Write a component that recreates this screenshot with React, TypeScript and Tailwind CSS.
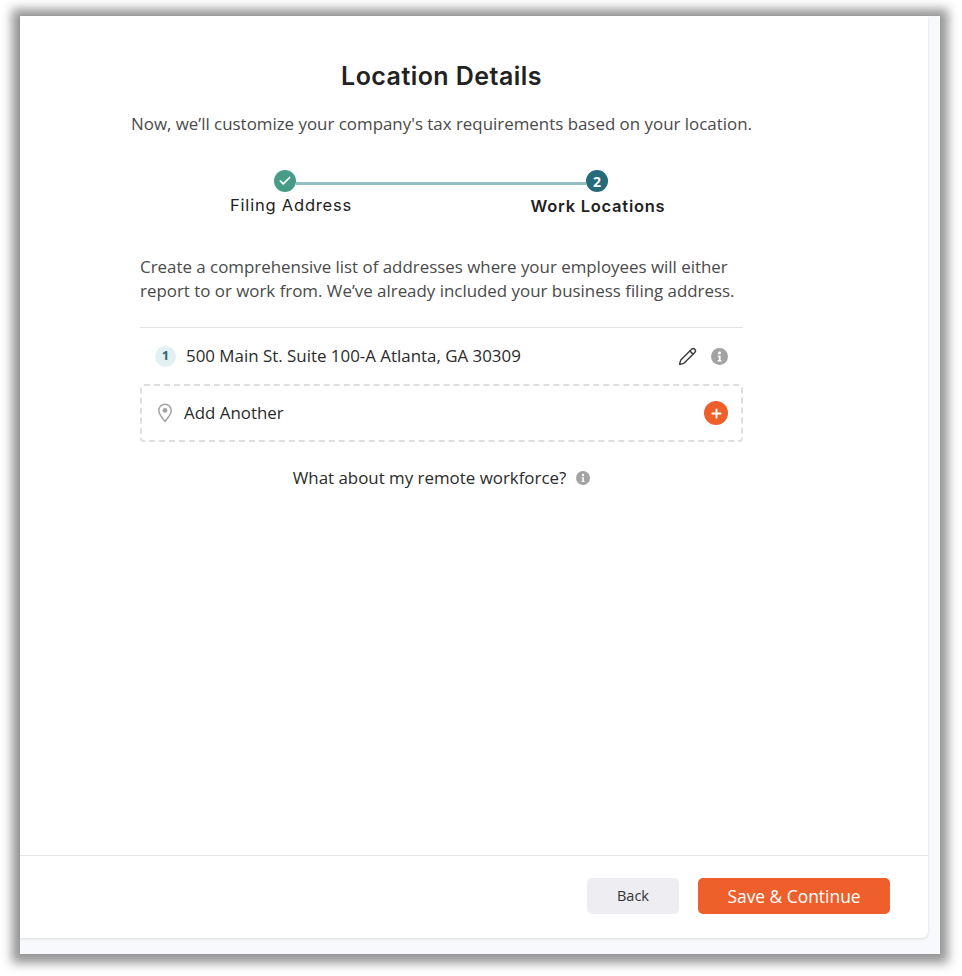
import { Check, Pencil } from 'lucide-react';

const body = 'font-["Open_Sans",sans-serif]';
const heading = 'font-["Inter",sans-serif]';

function InfoDot({ size }: { size: string }) {
  return (
    <svg viewBox="0 0 16 16" className={size}>
      <circle cx="8" cy="8" r="8" fill="#a3a3a3" />
      <circle cx="8" cy="4.6" r="1.4" fill="#fff" />
      <path d="M6.4 7h2.6v4.4h0.8v1.2H6.3v-1.2h1V8.2h-0.9z" fill="#fff" />
    </svg>
  );
}

function Stepper() {
  return (
    <div className="mt-[34px] flex w-[423px] flex-col">
      <div className="ml-[44px] flex w-[334px] items-center">
        <span className="flex h-[22px] w-[22px] shrink-0 items-center justify-center rounded-full bg-[#479c88]">
          <Check className="h-[14px] w-[14px] text-white" strokeWidth={3} />
        </span>
        <span className="mt-[4px] h-[3px] flex-1 bg-[#92bfc1]" />
        <span className="flex h-[22px] w-[22px] shrink-0 items-center justify-center rounded-full bg-[#276b7b] text-[14px] font-bold text-white">
          2
        </span>
      </div>
      <div className="mt-[2px] flex">
        <span className={`${heading} w-[122px] shrink-0 text-center text-[16.5px] leading-[22px] font-normal tracking-[0.8px] whitespace-nowrap text-[#222]`}>
          Filing Address
        </span>
        <span className={`${heading} mt-px ml-[178px] w-[136px] shrink-0 text-center text-[16.5px] leading-[22px] font-semibold tracking-[0.75px] whitespace-nowrap text-[#1f1f1f]`}>
          Work Locations
        </span>
      </div>
    </div>
  );
}

function AddressList() {
  return (
    <div className="mt-[24px] w-[603px] border-t border-[#e3e3e3]">
      <div className="flex h-[56px] items-center px-[15px]">
        <span className="flex h-[21px] w-[21px] items-center justify-center rounded-full bg-[#e3f0f3] text-[13px] font-bold text-[#276b7b]">
          1
        </span>
        <span className="ml-[10px] flex-1 text-[16.9px] text-[#2b2b2b]">500 Main St. Suite 100-A Atlanta, GA 30309</span>
        <Pencil className="h-[19px] w-[19px] text-[#3c3c3c]" strokeWidth={1.8} />
        <span className="ml-[14px]">
          <InfoDot size="h-[17px] w-[17px]" />
        </span>
      </div>
      <div className="flex h-[58px] items-center rounded-[4px] border-2 border-dashed border-[#dedede] pr-[13px] pl-[15px]">
        <svg viewBox="0 0 16 20" className="h-[20px] w-[16px]" fill="none">
          <path d="M8 1.2c3.5 0 6.2 2.7 6.2 6.2 0 3.9-4 8.4-6.2 11-2.2-2.6-6.2-7.1-6.2-11C1.800 3.900 4.500 1.200 8 1.200z" stroke="#a3a3a3" strokeWidth="1.5" />
          <circle cx="8" cy="7.400" r="2.400" fill="#a3a3a3" />
        </svg>
        <span className="ml-[11px] flex-1 text-[16.9px] text-[#2b2b2b]">Add Another</span>
        <span className="flex h-[24px] w-[24px] items-center justify-center rounded-full bg-[#ee5f2b]">
          <svg viewBox="0 0 12 12" className="h-[11px] w-[11px]">
            <path d="M6 1.500v9M1.500 6h9" stroke="#fff" strokeWidth="2" strokeLinecap="round" />
          </svg>
        </span>
      </div>
    </div>
  );
}

export default function App() {
  return (
    <div className={`${body} h-[976px] w-[962px] overflow-hidden bg-white pt-[16px] pl-[20px]`}>
      <div className="flex h-[938px] w-[920px] flex-col bg-[#f8f9fc] shadow-[0_1px_10px_8px_rgba(0,0,0,0.42)]">
        <div className="flex h-[922px] w-[908px] flex-col rounded-br-[6px] bg-white shadow-[0_1px_3px_rgba(0,0,0,0.12)]">
          <main className="flex h-[839px] w-[843px] flex-col items-center">
            <h1 className={`${heading} mt-[44px] text-[25px] leading-[32px] font-semibold tracking-[0.45px] text-[#222]`}>Location Details</h1>
            <p className="mt-[20px] text-[16.9px] leading-[24px] whitespace-nowrap text-[#4a4a4a]">
              Now, we’ll customize your company's tax requirements based on your location.
            </p>
            <Stepper />
            <p className="mt-[38px] w-[603px] text-[16.9px] leading-[24px] text-[#4a4a4a]">
              Create a comprehensive list of addresses where your employees will either report to or work from. We’ve already included your business filing address.
            </p>
            <AddressList />
            <div className="mt-[24px] flex items-center">
              <span className="text-[16.9px] leading-[24px] text-[#2b2b2b]">What about my remote workforce?</span>
              <span className="ml-[10px]">
                <InfoDot size="h-[14px] w-[14px]" />
              </span>
            </div>
          </main>
          <footer className="flex flex-1 items-start justify-end border-t border-[#e6e6e6] pt-[22px] pr-[38px]">
            <button className="h-[36px] w-[92px] rounded-[5px] bg-[#ededf2] text-[14.5px] text-[#333]">Back</button>
            <button className="ml-[19px] h-[36px] w-[192px] rounded-[5px] bg-[#ee5f2b] text-[17.4px] font-medium text-white">
              Save &amp; Continue
            </button>
          </footer>
        </div>
      </div>
    </div>
  );
}
